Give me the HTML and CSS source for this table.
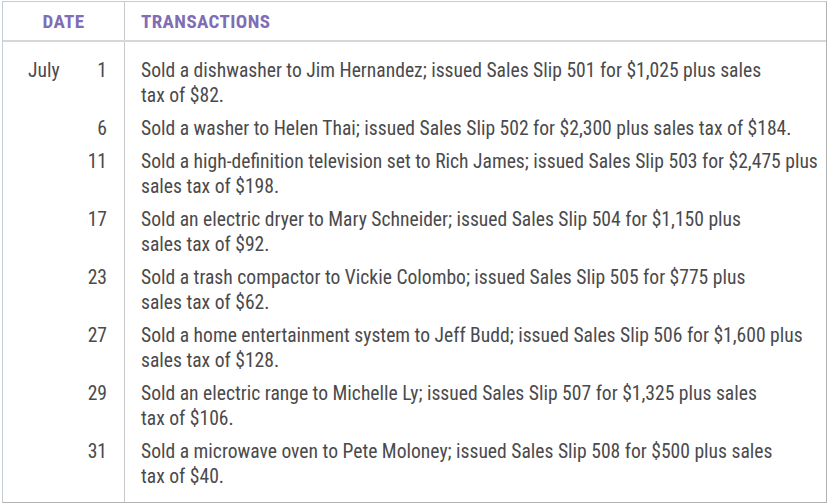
FILE: index.html
```html
<!DOCTYPE html>
<html>
<head>
<meta charset="utf-8">
<link rel="stylesheet" href="styles.css">
</head>
<body>
<div class="sheet">
  <div class="head">
    <div class="hdate">DATE</div>
    <div class="htrans">TRANSACTIONS</div>
  </div>
  <div class="body">
    <div class="date"><span class="month">July</span><span class="day">1</span></div>
    <div class="txt">Sold a dishwasher to Jim Hernandez; issued Sales Slip 501 for $1,025 plus sales<br>tax of $82.</div>

    <div class="date"><span class="day">6</span></div>
    <div class="txt">Sold a washer to Helen Thai; issued Sales Slip 502 for $2,300 plus sales tax of $184.</div>

    <div class="date"><span class="day">11</span></div>
    <div class="txt">Sold a high-definition television set to Rich James; issued Sales Slip 503 for $2,475 plus<br>sales tax of $198.</div>

    <div class="date"><span class="day">17</span></div>
    <div class="txt">Sold an electric dryer to Mary Schneider; issued Sales Slip 504 for $1,150 plus<br>sales tax of $92.</div>

    <div class="date"><span class="day">23</span></div>
    <div class="txt">Sold a trash compactor to Vickie Colombo; issued Sales Slip 505 for $775 plus<br>sales tax of $62.</div>

    <div class="date"><span class="day">27</span></div>
    <div class="txt">Sold a home entertainment system to Jeff Budd; issued Sales Slip 506 for $1,600 plus<br>sales tax of $128.</div>

    <div class="date"><span class="day">29</span></div>
    <div class="txt">Sold an electric range to Michelle Ly; issued Sales Slip 507 for $1,325 plus sales<br>tax of $106.</div>

    <div class="date"><span class="day">31</span></div>
    <div class="txt">Sold a microwave oven to Pete Moloney; issued Sales Slip 508 for $500 plus sales<br>tax of $40.</div>
  </div>
</div>
</body>
</html>
```
FILE: styles.css
```css
html, body {
  margin: 0;
  padding: 0;
  background: #ffffff;
}
.sheet {
  margin: 1px 0 0 2px;
  width: 825px;
  height: 502px;
  box-sizing: border-box;
  border: 1px solid #c5cbd2;
  border-bottom-color: #b3b3b3;
  border-right-color: #b3b3b3;
  display: flex;
  flex-direction: column;
  font-family: "Roboto Condensed", "Liberation Sans", Arial, sans-serif;
  color: #4a4a4c;
}
.head {
  display: grid;
  grid-template-columns: 121px 1fr;
  height: 40px;
  border-bottom: 2px solid #d7d7d7;
  box-sizing: border-box;
}
.hdate, .htrans {
  font-weight: bold;
  font-size: 19px;
  letter-spacing: 0.4px;
  color: #7f6db6;
  display: flex;
  align-items: center;
}
.hdate {
  justify-content: center;
}
.htrans {
  border-left: 1px solid #c8c8c8;
  padding-left: 16px;
}
.body {
  flex: 1;
  display: grid;
  grid-template-columns: 121px 1fr;
  grid-auto-rows: min-content;
  row-gap: 8px;
  padding: 16px 0 12px 0;
  position: relative;
}
.body::before {
  content: "";
  position: absolute;
  left: 121px;
  top: 0;
  bottom: 0;
  border-left: 1px solid #c8c8c8;
}
.date {
  display: flex;
  justify-content: space-between;
  font-size: 19.6px;
  line-height: 25px;
  padding: 0 17px 0 25px;
}
.date .day {
  margin-left: auto;
}
.txt {
  font-size: 19.6px;
  line-height: 25px;
  white-space: nowrap;
  padding-left: 17px;
}
```
